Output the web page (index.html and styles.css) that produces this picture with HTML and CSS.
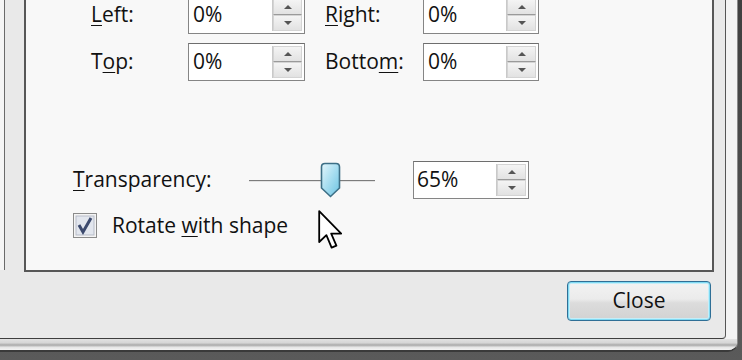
FILE: index.html
```html
<!DOCTYPE html>
<html>
<head>
<meta charset="utf-8">
<link rel="stylesheet" href="styles.css">
</head>
<body>
<div class="win">
  <div class="frame">
    <div class="upper">
      <div class="leftpane"></div>
      <div class="panel">
        <div class="margins">
          <span class="lbl"><u>L</u>eft:</span>
          <div class="spin"><span class="val">0%</span><div class="btns"><span class="up"></span><span class="down"></span></div></div>
          <span class="lbl r"><u>R</u>ight:</span>
          <div class="spin"><span class="val">0%</span><div class="btns"><span class="up"></span><span class="down"></span></div></div>
          <span class="lbl">T<u>o</u>p:</span>
          <div class="spin"><span class="val">0%</span><div class="btns"><span class="up"></span><span class="down"></span></div></div>
          <span class="lbl r">Botto<u>m</u>:</span>
          <div class="spin"><span class="val">0%</span><div class="btns"><span class="up"></span><span class="down"></span></div></div>
        </div>
        <div class="trans">
          <span class="tlbl"><u>T</u>ransparency:</span>
          <div class="slider">
            <div class="track"></div>
            <svg class="thumb" width="21" height="36" viewBox="0 0 21 36">
              <defs>
                <linearGradient id="tg" x1="0" y1="0" x2="1" y2="1">
                  <stop offset="0" stop-color="#e4f6fc"/>
                  <stop offset="0.5" stop-color="#a6ddf0"/>
                  <stop offset="1" stop-color="#6cc3e2"/>
                </linearGradient>
              </defs>
              <path d="M1.5 5 Q1.5 1.5 5 1.5 L16 1.5 Q19.5 1.5 19.5 5 L19.5 26 L10.5 34.5 L1.5 26 Z" fill="url(#tg)" stroke="#3d6f86" stroke-width="1.6"/>
            </svg>
          </div>
          <div class="spin wide"><span class="val">65%</span><div class="btns"><span class="up"></span><span class="down"></span></div></div>
        </div>
        <div class="rot">
          <span class="chk">
            <svg width="24" height="25" viewBox="0 0 24 25">
              <rect x="0.5" y="0.5" width="23" height="24" fill="#f4f4f4" stroke="#8b8b8b"/>
              <rect x="3" y="3" width="18" height="19" fill="#e2e6ee" stroke="#b7bcc8"/>
              <path d="M6 12 L10 19 L18 5" fill="none" stroke="#3c4a6e" stroke-width="3"/>
            </svg>
          </span>
          <span class="rlbl">Rotate <u>w</u>ith shape</span>
        </div>
        <svg class="cursor" width="26" height="41" viewBox="0 0 13 20.5">
          <path d="M0.6 0.6 L0.6 16 L4.2 12.6 L6.8 18.8 L9.2 17.8 L6.6 11.8 L11.6 11.8 Z" fill="#fff" stroke="#000" stroke-width="0.9" stroke-linejoin="round"/>
        </svg>
      </div>
    </div>
    <div class="footer">
      <button class="close">Close</button>
    </div>
  </div>
  <div class="band"></div>
</div>
</body>
</html>
```
FILE: styles.css
```css
html, body {
  margin: 0;
  padding: 0;
}
body {
  width: 742px;
  height: 360px;
  overflow: hidden;
  background: linear-gradient(#3f3f3f, #5a5a5a);
  font-family: "Open Sans", "Noto Sans", sans-serif;
  color: #111;
}
.win {
  width: 737px;
  height: 350px;
  background: #f3f3f3;
  border-right: 1px solid #8a8a8a;
  border-bottom: 2px solid #3a3a3a;
  border-bottom-right-radius: 10px;
  display: flex;
  flex-direction: column;
  overflow: hidden;
}
.frame {
  width: 725px;
  height: 338px;
  flex: none;
  background: #e9e9e9;
  border-right: 1px solid #555;
  border-bottom: 1px solid #3e3e3e;
  border-bottom-right-radius: 4px;
  display: flex;
  flex-direction: column;
}
.band {
  flex: 1;
  background: linear-gradient(#e2e2e2 0%, #d6d6d6 35%, #a9a9a9 55%, #e6e6e6 75%, #f3f3f3 100%);
}
.upper {
  height: 272px;
  display: flex;
  flex: none;
}
.leftpane {
  width: 4px;
  background: #f5f5f5;
  border-right: 1px solid #6a6a6a;
  margin-right: 19px;
  height: 270px;
}
.panel {
  width: 690px;
  box-sizing: border-box;
  background: #f8f8f8;
  border: 2px solid #575757;
  border-top: none;
  position: relative;
}
.margins {
  display: grid;
  grid-template-columns: 97px 117px 118px 116px;
  grid-auto-rows: 38px;
  row-gap: 9px;
  align-items: center;
  margin-top: -4px;
  padding-left: 65px;
}
.lbl, .tlbl, .rlbl, .val {
  font-size: 21px;
  line-height: 24px;
}
.lbl {
  padding-bottom: 2px;
}
.lbl.r {
  padding-left: 20px;
}
u {
  text-decoration-thickness: 1px;
  text-underline-offset: 3px;
}
.spin {
  height: 38px;
  box-sizing: border-box;
  border: 1px solid #858585;
  border-top-color: #6e6e6e;
  background: #fff;
  display: flex;
  align-items: center;
  justify-content: space-between;
  padding: 2px 2px 2px 4px;
}
.spin.wide {
  width: 116px;
  padding-left: 3px;
}
.val {
  padding-bottom: 2px;
}
.btns {
  width: 29px;
  height: 32px;
  display: flex;
  flex-direction: column;
  border-left: 1px solid #c9c9c9;
}
.btns span {
  flex: 1;
  display: flex;
  align-items: center;
  justify-content: center;
  background: linear-gradient(#f4f4f4, #e2e2e2);
  border: 1px solid #d4d4d4;
}
.btns .up {
  border-bottom-color: #9a9a9a;
}
.btns .up::after {
  content: "";
  border-left: 4px solid transparent;
  border-right: 4px solid transparent;
  border-bottom: 4px solid #555;
}
.btns .down::after {
  content: "";
  border-left: 4px solid transparent;
  border-right: 4px solid transparent;
  border-top: 4px solid #555;
}
.trans {
  display: flex;
  align-items: center;
  margin-top: 80px;
  padding-left: 47px;
  height: 38px;
}
.tlbl {
  width: 176px;
  flex: none;
  padding-bottom: 2px;
}
.slider {
  width: 126px;
  height: 38px;
  margin-right: 38px;
  flex: none;
  display: flex;
  align-items: center;
  position: relative;
}
.track {
  width: 100%;
  height: 1px;
  background: #7c7c7c;
  box-shadow: 0 1px 0 #e2e2e2;
}
.thumb {
  position: absolute;
  left: 71px;
  top: 1px;
}
.rot {
  display: flex;
  align-items: center;
  margin-top: 14px;
  padding-left: 47px;
  height: 25px;
}
.chk {
  width: 24px;
  height: 25px;
  display: block;
  margin-right: 15px;
}
.chk svg {
  display: block;
}
.rlbl {
  padding-bottom: 1px;
}
.cursor {
  position: absolute;
  left: 292px;
  top: 210px;
}
.footer {
  flex: 1;
  display: flex;
  justify-content: flex-end;
  align-items: flex-start;
  padding: 9px 14px 0 0;
}
.close {
  width: 144px;
  height: 40px;
  border: 1px solid #2f6f96;
  border-radius: 4px;
  background: linear-gradient(#f3f3f3 0%, #ebebeb 45%, #dcdcdc 55%, #d2d2d2 100%);
  box-shadow: inset 0 0 0 1px #7fd9f2, inset 0 0 0 2px #c4eef9;
  font-family: "Open Sans", "Noto Sans", sans-serif;
  font-size: 21px;
  color: #111;
  padding: 0 0 2px 0;
}
```
